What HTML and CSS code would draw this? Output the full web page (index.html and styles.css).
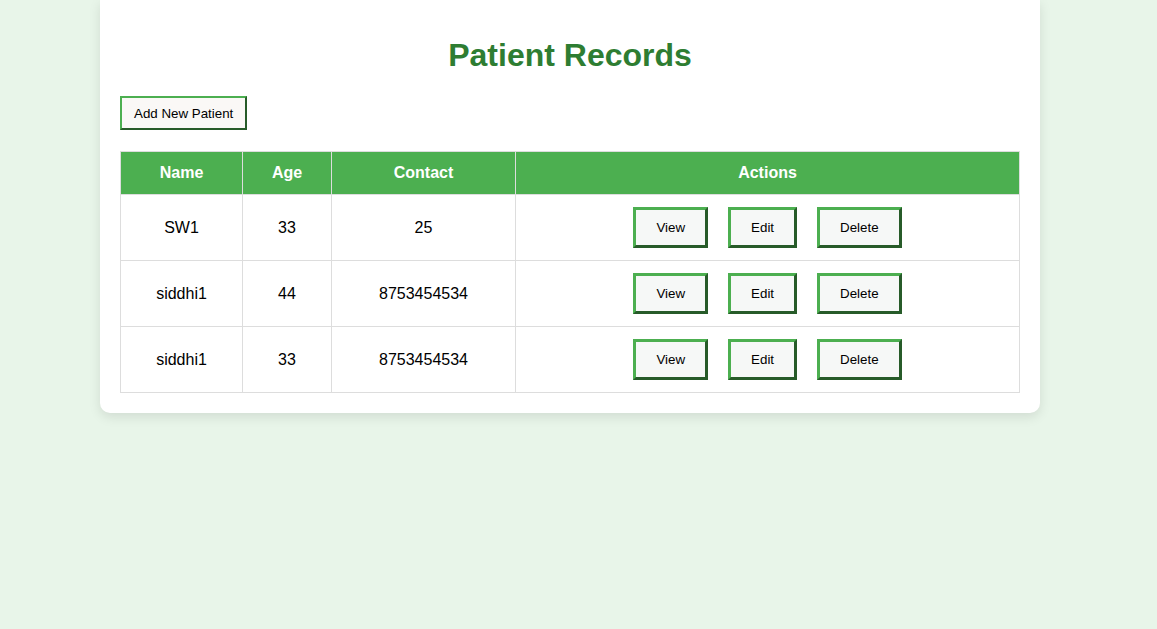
FILE: index.html
```html
<!DOCTYPE html>
<html lang="en">
<head>
<meta charset="utf-8">
<title>Patient Records</title>
<link rel="stylesheet" href="styles.css">
</head>
<body>
<div class="card">
  <h1 class="title">Patient Records</h1>
  <button class="add-btn">Add New Patient</button>
  <table class="records">
    <thead>
      <tr>
        <th class="col-name">Name</th>
        <th class="col-age">Age</th>
        <th class="col-contact">Contact</th>
        <th class="col-actions">Actions</th>
      </tr>
    </thead>
    <tbody>
      <tr>
        <td>SW1</td><td>33</td><td>25</td>
        <td><div class="actions"><button class="act-btn">View</button><button class="act-btn">Edit</button><button class="act-btn">Delete</button></div></td>
      </tr>
      <tr>
        <td>siddhi1</td><td>44</td><td>8753454534</td>
        <td><div class="actions"><button class="act-btn">View</button><button class="act-btn">Edit</button><button class="act-btn">Delete</button></div></td>
      </tr>
      <tr>
        <td>siddhi1</td><td>33</td><td>8753454534</td>
        <td><div class="actions"><button class="act-btn">View</button><button class="act-btn">Edit</button><button class="act-btn">Delete</button></div></td>
      </tr>
    </tbody>
  </table>
</div>
</body>
</html>
```
FILE: styles.css
```css
html, body {
  margin: 0;
  padding: 0;
}
body {
  background: #e8f5e9;
  font-family: "Liberation Sans", Arial, sans-serif;
  padding-right: 17px;
  min-height: 629px;
  box-sizing: border-box;
}
.card {
  width: 940px;
  box-sizing: border-box;
  margin: 0 auto;
  background: #ffffff;
  border-radius: 0 0 10px 10px;
  padding: 16px 20px 20px;
  box-shadow: 0 4px 12px rgba(0, 0, 0, 0.1);
}
.title {
  color: #2e7d32;
  text-align: center;
  font-size: 32px;
  font-weight: bold;
  margin: 21px 0 22px;
  line-height: 37px;
}
.add-btn {
  font-family: "Liberation Sans", Arial, sans-serif;
  font-size: 13.333px;
  line-height: 15px;
  padding: 7.5px 12px;
  background: #faf8f6;
  border: 2px outset #4caf50;
  color: #000;
  display: block;
}
.records {
  margin-top: 21px;
  width: 900px;
  border-collapse: collapse;
  font-size: 16px;
}
.records th,
.records td {
  border: 1px solid #dddddd;
  padding: 12px;
  text-align: center;
  line-height: 18px;
}
.records th {
  background: #4caf50;
  color: #ffffff;
  font-weight: bold;
}
.col-name { width: 97px; }
.col-age { width: 64px; }
.col-contact { width: 159px; }
.actions {
  display: flex;
  justify-content: center;
  gap: 20px;
}
.act-btn {
  font-family: "Liberation Sans", Arial, sans-serif;
  font-size: 13.333px;
  line-height: 15px;
  padding: 10px 20px;
  background: #f6f8f7;
  border: 3px outset #4caf50;
  color: #000;
}
```
